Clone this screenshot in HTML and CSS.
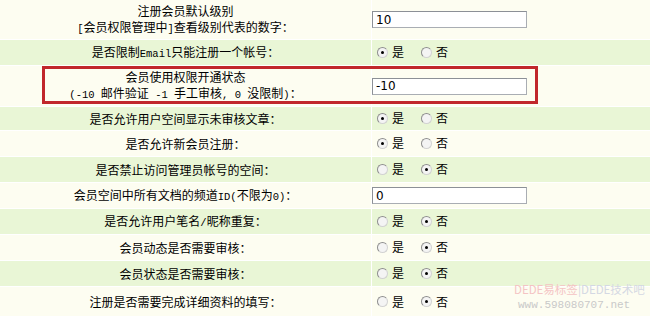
FILE: index.html
```html
<!DOCTYPE html>
<html lang="zh-CN">
<head>
<meta charset="utf-8">
<title>会员设置</title>
<link rel="stylesheet" href="styles.css">
</head>
<body>
<table class="cfg">
  <tr class="odd tall first">
    <td class="label">注册会员默认级别<br><span class="en">[</span>会员权限管理中<span class="en">]</span>查看级别代表的数字：</td>
    <td class="val"><input class="txt" type="text" value="10"></td>
  </tr>
  <tr class="even">
    <td class="label">是否限制<span class="en">Email</span>只能注册一个帐号：</td>
    <td class="val"><label><input class="rd" type="radio" name="r2" checked>是</label><label><input class="rd" type="radio" name="r2">否</label></td>
  </tr>
  <tr class="odd tall">
    <td class="label">会员使用权限开通状态<br><span class="en">(-10 </span>邮件验证<span class="en"> -1 </span>手工审核<span class="en">, 0 </span>没限制<span class="en">)</span>：</td>
    <td class="val"><input class="txt" type="text" value="-10"></td>
  </tr>
  <tr class="even short">
    <td class="label">是否允许用户空间显示未审核文章：</td>
    <td class="val"><label><input class="rd" type="radio" name="r4" checked>是</label><label><input class="rd" type="radio" name="r4">否</label></td>
  </tr>
  <tr class="odd">
    <td class="label">是否允许新会员注册：</td>
    <td class="val"><label><input class="rd" type="radio" name="r5" checked>是</label><label><input class="rd" type="radio" name="r5">否</label></td>
  </tr>
  <tr class="even">
    <td class="label">是否禁止访问管理员帐号的空间：</td>
    <td class="val"><label><input class="rd" type="radio" name="r6">是</label><label><input class="rd" type="radio" name="r6" checked>否</label></td>
  </tr>
  <tr class="odd inp">
    <td class="label">会员空间中所有文档的频道<span class="en">ID(</span>不限为<span class="en">0)</span>：</td>
    <td class="val"><input class="txt" type="text" value="0"></td>
  </tr>
  <tr class="even">
    <td class="label">是否允许用户笔名<span class="en">/</span>昵称重复：</td>
    <td class="val"><label><input class="rd" type="radio" name="r8">是</label><label><input class="rd" type="radio" name="r8" checked>否</label></td>
  </tr>
  <tr class="odd">
    <td class="label">会员动态是否需要审核：</td>
    <td class="val"><label><input class="rd" type="radio" name="r9">是</label><label><input class="rd" type="radio" name="r9" checked>否</label></td>
  </tr>
  <tr class="even">
    <td class="label">会员状态是否需要审核：</td>
    <td class="val"><label><input class="rd" type="radio" name="r10">是</label><label><input class="rd" type="radio" name="r10" checked>否</label></td>
  </tr>
  <tr class="odd last">
    <td class="label">注册是否需要完成详细资料的填写：</td>
    <td class="val"><label><input class="rd" type="radio" name="r11">是</label><label><input class="rd" type="radio" name="r11" checked>否</label></td>
  </tr>
</table>
<div class="highlight"></div>
<div class="watermark">
  <div class="wm1"><span class="pink">DEDE易标签</span>|DEDE技术吧</div>
  <div class="wm2">www.598080707.net</div>
</div>
</body>
</html>
```
FILE: styles.css
```css
html, body {
  margin: 0;
  padding: 0;
  background: #ffffff;
}
body {
  position: relative;
  width: 650px;
  height: 316px;
  overflow: hidden;
  font-family: "Noto Sans CJK SC", "Noto Sans", sans-serif;
  font-size: 12px;
  color: #000;
}
.cfg {
  width: 650px;
  border-collapse: separate;
  border-spacing: 0;
  table-layout: fixed;
}
.cfg td {
  padding: 0;
  height: 25px;
  border-bottom: 1px solid #ffffff;
  line-height: 16px;
  vertical-align: middle;
}
.cfg tr.tall td { height: 40px; }
.cfg tr.first td { height: 39px; }
.cfg tr.short td { height: 23px; }
.cfg tr.last td { height: 30px; }
.cfg tr.odd td { background: #fdfdf1; }
.cfg tr.even td { background: #e9f6d6; }
.cfg td.label {
  width: 371px;
  text-align: center;
  border-right: 1px solid #ffffff;
}
.cfg td.val {
  text-align: left;
}
.en {
  font-family: "Liberation Mono", "DejaVu Sans Mono", monospace;
  font-size: 10.5px;
  white-space: pre;
}
.txt {
  box-sizing: border-box;
  width: 155px;
  height: 17px;
  margin: 0;
  padding: 0 3px;
  border: 1px solid #a9adb3;
  border-top-color: #8c9096;
  border-left-color: #8c9096;
  background: #ffffff;
  font-family: "DejaVu Sans", sans-serif;
  font-size: 12px;
  line-height: 15px;
  color: #000;
  display: block;
}
.val label {
  display: inline-flex;
  align-items: center;
  margin-right: 12px;
}
.rd {
  -webkit-appearance: none;
  appearance: none;
  box-sizing: border-box;
  width: 11px;
  height: 11px;
  margin: 0 4px 0 5px;
  border-radius: 50%;
  border: 1px solid #d2d2d2;
  border-top-color: #8e8e8e;
  border-left-color: #8e8e8e;
  background: #f4f4f4;
  position: relative;
}
.rd:checked::after {
  content: "";
  position: absolute;
  left: 3px;
  top: 3px;
  width: 3px;
  height: 3px;
  border-radius: 50%;
  background: #000;
}
.highlight {
  position: absolute;
  left: 42px;
  top: 66px;
  width: 496px;
  height: 38px;
  box-sizing: border-box;
  border: 3px solid #c1272c;
}
.watermark {
  position: absolute;
  left: 514px;
  top: 283px;
  color: #d4d8e3;
  white-space: nowrap;
}
.wm1 {
  font-family: "Noto Sans CJK SC", sans-serif;
  font-size: 11.5px;
  line-height: 13px;
}
.wm1 .pink { color: #f4c4c4; }
.wm2 {
  margin-top: 3px;
  margin-left: 4px;
  font-family: "Liberation Mono", monospace;
  font-size: 11px;
  line-height: 12px;
  color: #c9c9c9;
}
```
